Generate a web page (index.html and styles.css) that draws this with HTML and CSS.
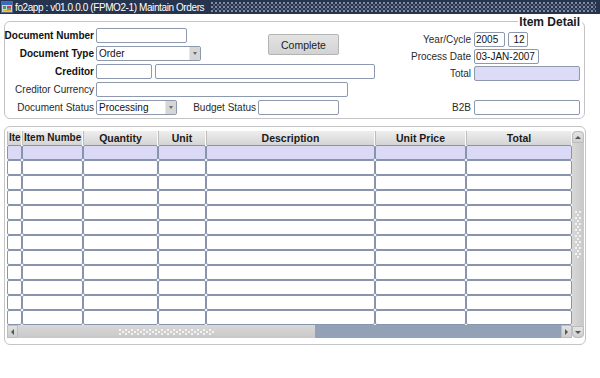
FILE: index.html
```html
<!DOCTYPE html>
<html>
<head>
<meta charset="utf-8">
<link rel="stylesheet" href="styles.css">
</head>
<body>
<div class="titlebar">
  <span class="appicon">
    <svg width="12" height="12" viewBox="0 0 12 12">
      <rect x="0.5" y="0.5" width="11" height="11" fill="#c8d4e8" stroke="#5a6a8a"/>
      <rect x="1" y="1" width="10" height="3" fill="#3a66c4"/>
      <rect x="2" y="5" width="3" height="3" fill="#3aa04a"/>
      <rect x="6" y="5" width="4" height="2" fill="#d04030"/>
      <rect x="2" y="9" width="8" height="1.5" fill="#e0b030"/>
      <rect x="6" y="7.5" width="4" height="1" fill="#2a3a6a"/>
    </svg>
  </span>
  <span class="title">fo2app : v01.0.0.0 (FPMO2-1) Maintain Orders</span>
  <span class="grip"></span>
</div>

<div class="panel header-panel">
  <span class="legend">Item Detail</span>
  <div class="left-grid">
    <label class="lbl bold r1">Document Number</label>
    <div class="fld r1 c2"><span class="inp w-docnum"></span></div>
    <div class="btn-cell"><button class="btn">Complete</button></div>

    <label class="lbl bold r2">Document Type</label>
    <div class="fld r2 c2"><span class="sel w-doctype"><span class="sel-text">Order</span><span class="sel-arrow"></span></span></div>

    <label class="lbl bold r3">Creditor</label>
    <div class="fld r3 span"><span class="inp w-cred1"></span><span class="inp w-cred2"></span></div>

    <label class="lbl r4">Creditor Currency</label>
    <div class="fld r4 span"><span class="inp w-curr"></span></div>

    <label class="lbl r5">Document Status</label>
    <div class="fld r5 span">
      <span class="sel w-status"><span class="sel-text">Processing</span><span class="sel-arrow"></span></span>
      <label class="lbl inline w-budlbl">Budget Status</label>
      <span class="inp w-budget"></span>
    </div>
  </div>

  <div class="right-grid">
    <label class="lbl">Year/Cycle</label>
    <div class="fld"><span class="inp w-year">2005</span><span class="inp w-cycle">12</span></div>

    <label class="lbl">Process Date</label>
    <div class="fld"><span class="inp w-date">03-JAN-2007</span></div>

    <label class="lbl">Total</label>
    <div class="fld"><span class="inp w-total lav"></span></div>

    <label class="lbl"></label>
    <div class="fld"></div>

    <label class="lbl">B2B</label>
    <div class="fld"><span class="inp w-total"></span></div>
  </div>
</div>

<div class="panel table-panel">
  <div class="table-area">
    <div class="grid">
      <div class="th th-left">Ite</div>
      <div class="th th-left">Item Numbe</div>
      <div class="th">Quantity</div>
      <div class="th">Unit</div>
      <div class="th">Description</div>
      <div class="th">Unit Price</div>
      <div class="th">Total</div>
    </div>
    <div class="grid rows" id="rows"></div>
    <div class="hscroll">
      <span class="sb-btn left"><span class="tri-l"></span></span>
      <span class="hthumb"><span class="hgrip"></span></span>
      <span class="htrack"></span>
      <span class="sb-btn right"><span class="tri-r"></span></span>
    </div>
  </div>
  <div class="vscroll">
    <span class="vbtn up"><span class="tri-u"></span></span>
    <span class="vthumb"><span class="vgrip"></span></span>
    <span class="vbtn down"><span class="tri-d"></span></span>
  </div>
</div>

<script>
  var rows = document.getElementById('rows');
  var html = '';
  for (var r = 0; r < 12; r++) {
    for (var c = 0; c < 7; c++) {
      html += '<div class="td' + (r === 0 ? ' lav' : '') + '"></div>';
    }
  }
  rows.innerHTML = html;
</script>
</body>
</html>
```
FILE: styles.css
```css
* { box-sizing: border-box; }
html, body { margin: 0; padding: 0; background: #fff; }
body {
  font-family: "Liberation Sans", Arial, sans-serif;
  font-size: 10px;
  color: #222;
  width: 600px;
  height: 378px;
  overflow: hidden;
}

/* title bar */
.titlebar {
  height: 14px;
  background: #27344e;
  display: flex;
  align-items: center;
  color: #fff;
  font-size: 10px;
}
.appicon { width: 13px; height: 12px; margin-left: 1px; display: flex; }
.title { margin-left: 1px; white-space: nowrap; letter-spacing: -0.4px; }
.grip {
  flex: 1;
  height: 10px;
  margin: 0 4px 0 7px;
  background-image:
    radial-gradient(circle at 1px 1px, #8390a8 0.7px, transparent 0.9px),
    radial-gradient(circle at 1px 1px, #56637d 0.7px, transparent 0.9px);
  background-size: 4px 4px, 4px 4px;
  background-position: 0 0, 2px 2px;
}

/* panels */
.panel {
  position: relative;
  margin-left: 4px;
  border: 1px solid #c4c4c4;
  border-radius: 6px;
}
.header-panel {
  margin-top: 7px;
  width: 581px;
  height: 98px;
  display: flex;
  align-items: flex-start;
}
.legend {
  position: absolute;
  top: -6px;
  right: 2px;
  background: #fff;
  padding: 0 2px 0 1px;
  font-weight: bold;
  font-size: 12px;
  color: #1a1a1a;
  line-height: 13px;
}

.lbl {
  display: flex;
  align-items: center;
  justify-content: flex-end;
  padding-right: 2px;
  white-space: nowrap;
  height: 15px;
  color: #2a2a2a;
}
.lbl.bold { font-weight: bold; font-size: 10px; color: #111; }

.left-grid {
  display: grid;
  grid-template-columns: 91px 172px 71px 36px;
  grid-auto-rows: 15px;
  row-gap: 3px;
  padding-top: 6px;
}
.r1 { grid-row: 1; grid-column: 1; }
.r2 { grid-row: 2; grid-column: 1; }
.r3 { grid-row: 3; grid-column: 1; }
.r4 { grid-row: 4; grid-column: 1; }
.r5 { grid-row: 5; grid-column: 1; }
.fld.c2 { grid-column: 2; }
.fld.span { grid-column: 2 / 5; }
.fld { display: flex; align-items: center; height: 15px; }
.btn-cell { grid-column: 3; grid-row: 1 / 3; }
.btn {
  margin-top: 6px;
  width: 71px;
  height: 21px;
  border: 1px solid #b4b4b4;
  border-radius: 2px;
  background: linear-gradient(#e4e4e4, #d2d2d2);
  font-family: "Liberation Sans", Arial, sans-serif;
  font-size: 10.5px;
  color: #222;
  padding: 0;
}

.inp, .sel {
  display: flex;
  align-items: center;
  height: 15px;
  border: 1px solid #8c99ae;
  border-radius: 2px;
  background: #fff;
  padding-left: 2px;
  font-size: 10px;
  color: #111;
  white-space: nowrap;
}
.inp.lav { background: #dcdcf7; }
.sel { padding-left: 2px; justify-content: space-between; padding-right: 0; }
.sel-text { flex: 1; }
.sel-arrow {
  width: 11px;
  height: 13px;
  background: #d6d6d6;
  border-left: 1px solid #e8e8e8;
  position: relative;
}
.sel-arrow::after {
  content: "";
  position: absolute;
  left: 3px;
  top: 5px;
  border-left: 2.5px solid transparent;
  border-right: 2.5px solid transparent;
  border-top: 3px solid #6a6a6a;
}
.w-docnum { width: 91px; }
.w-doctype { width: 105px; }
.w-cred1 { width: 56px; }
.w-cred2 { width: 220px; margin-left: 3px; }
.w-curr { width: 252px; }
.w-status { width: 81px; }
.w-budlbl { width: 81px; padding-right: 2px; }
.w-budget { width: 81px; }

.right-grid {
  display: grid;
  grid-template-columns: 99px 106px;
  grid-auto-rows: 15px;
  row-gap: 2px;
  padding-top: 10px;
}
.right-grid .lbl { padding-right: 3px; }
.w-year { width: 31px; padding-left: 1px; }
.w-cycle { width: 20px; margin-left: 3px; justify-content: center; }
.w-date { width: 65px; padding-left: 1px; }
.w-total { width: 106px; }

/* table panel */
.table-panel {
  margin-top: 7px;
  width: 582px;
  height: 219px;
  padding: 4px 1px 6px 2px;
  display: flex;
}
.table-area { width: 565px; display: flex; flex-direction: column; }
.grid {
  display: grid;
  grid-template-columns: 15px 61px 75px 48px 169px 91px 106px;
}
.th {
  height: 14px;
  background: linear-gradient(#eeeeee, #d4d4d4);
  border-right: 1px solid #fafafa;
  border-left: 1px solid #bdbdbd;
  font-weight: bold;
  font-size: 10.5px;
  color: #1a1a1a;
  text-align: center;
  line-height: 14px;
  white-space: nowrap;
  overflow: hidden;
}
.th.th-left { text-align: left; padding-left: 1px; font-size: 10px; }
.rows { grid-auto-rows: 15px; }
.td {
  border: 1px solid #8794ab;
  border-radius: 2px;
  background: #fff;
}
.td.lav { background: #dadaf6; }

.hscroll {
  height: 13px;
  display: flex;
  background: #d2d2d2;
}
.sb-btn {
  width: 11px;
  height: 13px;
  background: linear-gradient(#e2e2e2, #cccccc);
  border: 1px solid #bdbdbd;
  display: flex;
  align-items: center;
  justify-content: center;
}
.tri-l { border-top: 3px solid transparent; border-bottom: 3px solid transparent; border-right: 3px solid #555; }
.tri-r { border-top: 3px solid transparent; border-bottom: 3px solid transparent; border-left: 3px solid #555; }
.hthumb {
  width: 297px;
  background: linear-gradient(#d8d8d8, #c8c8c8);
  display: flex;
  align-items: center;
  justify-content: center;
}
.hgrip {
  width: 96px;
  height: 6px;
  background-image:
    radial-gradient(circle at 1px 1px, #f4f4f4 0.7px, transparent 0.9px),
    radial-gradient(circle at 1px 1px, #f4f4f4 0.7px, transparent 0.9px);
  background-size: 6px 4px, 6px 4px;
  background-position: 0 0, 3px 2px;
}
.htrack { flex: 1; background: #93a1b6; }

.vscroll {
  width: 12px;
  height: 207px;
  display: flex;
  flex-direction: column;
  background: #d0d0d0;
  border-radius: 4px;
}
.vbtn {
  height: 12px;
  display: flex;
  align-items: center;
  justify-content: center;
  background: linear-gradient(#e4e4e4, #cfcfcf);
  border: 1px solid #bcbcbc;
}
.vbtn.up { border-radius: 5px 5px 0 0; }
.vbtn.down { border-radius: 0 0 5px 5px; }
.tri-u { border-left: 3px solid transparent; border-right: 3px solid transparent; border-bottom: 3px solid #555; }
.tri-d { border-left: 3px solid transparent; border-right: 3px solid transparent; border-top: 3px solid #555; }
.vthumb {
  flex: 1;
  display: flex;
  align-items: center;
  justify-content: center;
  background: linear-gradient(90deg, #d8d8d8, #c8c8c8);
}
.vgrip {
  width: 6px;
  height: 48px;
  background-image:
    radial-gradient(circle at 1px 1px, #f4f4f4 0.7px, transparent 0.9px),
    radial-gradient(circle at 1px 1px, #f4f4f4 0.7px, transparent 0.9px);
  background-size: 4px 6px, 4px 6px;
  background-position: 0 0, 2px 3px;
}
```
